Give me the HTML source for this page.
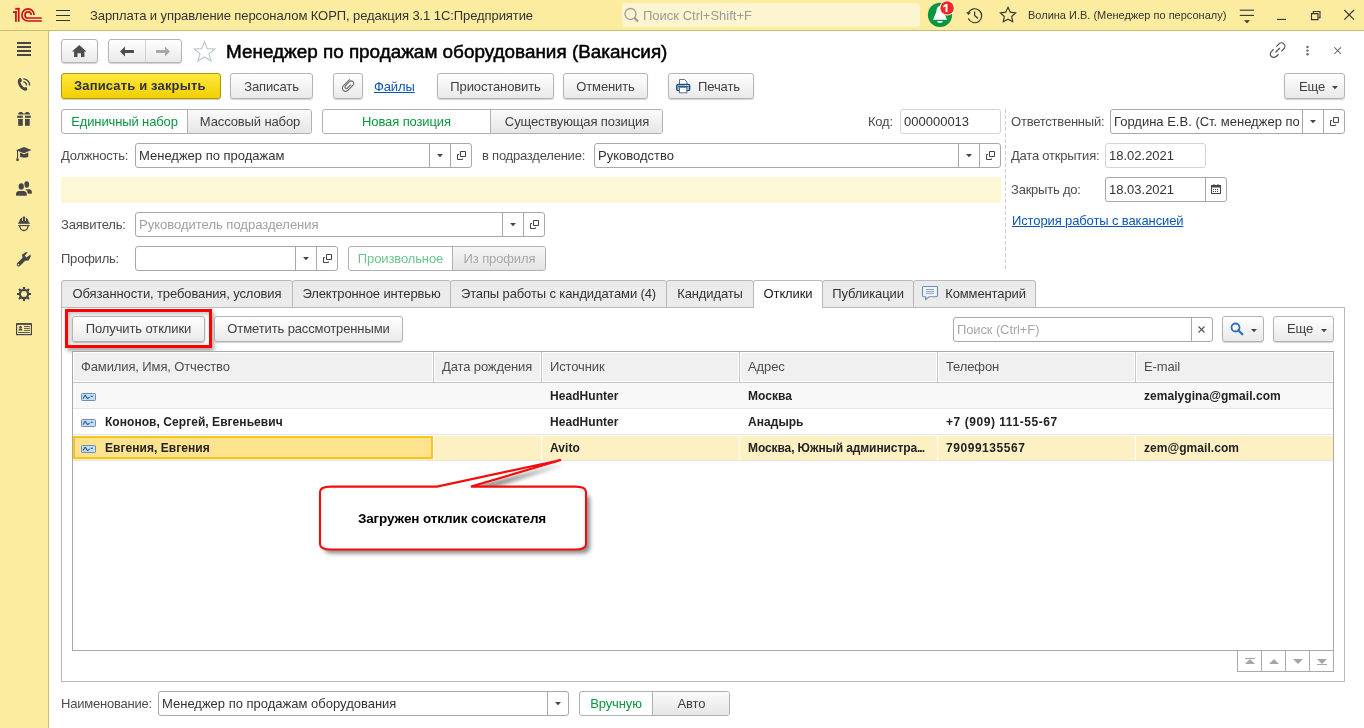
<!DOCTYPE html>
<html><head><meta charset="utf-8">
<style>
*{box-sizing:border-box;margin:0;padding:0}
html,body{width:1364px;height:728px;overflow:hidden;background:#fff;font-family:"Liberation Sans",sans-serif;font-size:13px;color:#333;letter-spacing:-0.12px}
.a{position:absolute}
.t{position:absolute;white-space:nowrap;line-height:15px}
#hdr{left:0;top:0;width:1364px;height:31px;background:#fbeca0;border-bottom:1px solid #cbbb6f}
#side{left:0;top:31px;width:49px;height:697px;background:#fbeca0;border-right:1px solid #cdbf7a}
.btn{position:absolute;border:1px solid #b4b4b4;border-radius:3px;background:linear-gradient(#ffffff,#e9e9e9);box-shadow:0 1px 1px rgba(0,0,0,.18);color:#404040;text-align:center;white-space:nowrap}
.inp{position:absolute;border:1px solid #a8a8a8;border-radius:3px;background:#fff;white-space:nowrap;overflow:hidden}
.inp.ro{border-color:#d4d4d4}
.dd{position:absolute;top:0;bottom:0;border-left:1px solid #a8a8a8}
.lbl{position:absolute;white-space:nowrap;color:#4d4d4d;line-height:15px;letter-spacing:-0.22px}
.tab{position:absolute;top:280px;height:28px;border:1px solid #c8c8c8;border-bottom:none;border-radius:3px 3px 0 0;background:#ebebeb;color:#333;line-height:26px;text-align:center;white-space:nowrap}
.col{position:absolute;top:351px;height:31px;border-left:1px solid #dcdcdc;line-height:30px;padding-left:8px;color:#4d4d4d;white-space:nowrap}
.cell{position:absolute;white-space:nowrap;font-weight:bold;font-size:12px;color:#222;line-height:26px;letter-spacing:0.05px}
body{will-change:transform}</style></head>
<body>
<!-- header -->
<div id="hdr" class="a"></div>
<div id="side" class="a"></div>

<!-- 1C logo -->
<svg class="a" style="left:0;top:0" width="50" height="30" viewBox="0 0 50 30">
 <g fill="#d0121a">
  <rect x="13" y="11.2" width="3.8" height="1.8"/><rect x="15" y="11.2" width="1.8" height="10.6"/>
  <rect x="15.2" y="7.9" width="4.4" height="1.8"/><rect x="17.8" y="7.9" width="1.8" height="13.9"/>
 </g>
 <g fill="none" stroke="#d0121a" stroke-width="1.7">
  <path d="M34.1 14.9 A6.1 6.1 0 1 0 28 21 H41.8"/>
  <path d="M31.1 15 A3.05 3.05 0 1 0 28 18 H41.8"/>
 </g>
</svg>
<!-- hamburger -->
<div class="a" style="left:56px;top:10px;width:14px;height:2px;border-top:1.5px solid #333"></div>
<div class="a" style="left:56px;top:15px;width:14px;height:2px;border-top:1.5px solid #333"></div>
<div class="a" style="left:56px;top:20px;width:14px;height:2px;border-top:1.5px solid #333"></div>
<div class="t" style="left:90px;top:8px;color:#333;letter-spacing:-0.08px">Зарплата и управление персоналом КОРП, редакция 3.1 1С:Предприятие</div>
<!-- search -->
<div class="a" style="left:622px;top:3px;width:298px;height:24px;background:#fdf5cf;border-radius:3px"></div>
<svg class="a" style="left:623px;top:5px" width="18" height="20" viewBox="0 0 18 20"><circle cx="7.5" cy="9" r="5.5" fill="none" stroke="#999" stroke-width="1.3"/><path d="M11.5 13 L15 16.5" stroke="#999" stroke-width="2.2"/></svg>
<div class="t" style="left:643px;top:8px;color:#9a9a9a;letter-spacing:0">Поиск Ctrl+Shift+F</div>

<!-- bell -->
<svg class="a" style="left:920px;top:0" width="40" height="30" viewBox="920 0 40 30">
 <circle cx="940" cy="14.9" r="12.1" fill="#08963f"/>
 <path d="M940 6 C937 6 936.6 9.5 936.3 12 L933 19.8 H947 L943.7 12 C943.4 9.5 943 6 940 6 Z" fill="#fff"/>
 <path d="M936.9 21 H942.9 C942.5 22.3 941.4 23 939.9 23 C938.4 23 937.3 22.3 936.9 21 Z" fill="#fff"/>
 <circle cx="947.1" cy="7.9" r="7.5" fill="#fff"/>
 <circle cx="947.1" cy="7.9" r="6.7" fill="#f42424"/>
 <path d="M943.2 5.7 L945.6 3.9 H947.5 V11.9 H945.5 V6.5 L943.2 7.5 Z" fill="#fff"/>
</svg>
<!-- history -->
<svg class="a" style="left:960px;top:0" width="30" height="30" viewBox="960 0 30 30">
 <path d="M968.6 12.3 A7 7 0 1 1 968.3 18.6" fill="none" stroke="#333" stroke-width="1.2"/>
 <path d="M966.1 12.2 H970.9 L968.5 15.1 Z" fill="#333"/>
 <path d="M974.6 11.5 V15.5 L978 18.5" fill="none" stroke="#333" stroke-width="1.2"/>
</svg>
<!-- star header -->
<svg class="a" style="left:990px;top:0" width="36" height="30" viewBox="990 0 36 30">
 <path d="M1008.00 7.30 L1010.29 12.14 L1015.61 12.83 L1011.71 16.51 L1012.70 21.77 L1008.00 19.20 L1003.30 21.77 L1004.29 16.51 L1000.39 12.83 L1005.71 12.14 Z" fill="none" stroke="#333" stroke-width="1.15" stroke-linejoin="miter"/>
</svg>
<div class="t" style="left:1028px;top:8px;font-size:11px;color:#333;letter-spacing:0">Волина И.В. (Менеджер по персоналу)</div>
<!-- filter -->
<svg class="a" style="left:1230px;top:0" width="134" height="30" viewBox="1230 0 134 30">
 <g stroke="#333" stroke-width="1.1" fill="none">
  <path d="M1239.8 10.2 H1254"/><path d="M1239.8 15.4 H1254"/>
  <path d="M1277 19.4 H1286"/>
  <path d="M1311.5 13.6 H1318 V19.6 H1311.5 Z"/><path d="M1313.3 13.6 V11.5 H1320 V17.7 H1318"/>
  <path d="M1344.3 10 L1354 19.7 M1354 10 L1344.3 19.7"/>
 </g>
 <path d="M1244 20.2 H1250 L1247 23.2 Z" fill="#333"/>
</svg>

<!-- sidebar icons -->
<svg class="a" style="left:0;top:30px" width="48" height="320" viewBox="0 30 48 320">
 <g fill="#46464a">
  <rect x="17" y="42" width="14" height="2"/><rect x="17" y="46" width="14" height="2"/><rect x="17" y="50" width="14" height="2"/><rect x="17" y="54" width="14" height="2"/>
 </g>
 <!-- phone -->
 <path d="M18.3 79.6 C18.7 78.4 19.8 77.7 20.9 78 L22 80.7 C21.8 81.5 21.1 82 20.4 82.3 C20.9 84.5 22.4 86.4 24.2 87.5 C24.8 87.1 25.5 86.8 26.3 87 L27.5 89.3 C27.3 90.3 26.2 90.9 25 90.7 C21.5 89.7 18.5 86 17.8 82.4 C17.7 81.4 17.9 80.4 18.3 79.6 Z" fill="#46464a"/>
 <path d="M23.3 81.9 A3.4 3.4 0 0 1 26.6 85.4" fill="none" stroke="#46464a" stroke-width="1.3"/>
 <path d="M23.3 78.8 A6.5 6.5 0 0 1 29.6 85.4" fill="none" stroke="#46464a" stroke-width="1.3"/>
 <!-- gift -->
 <g fill="#46464a">
  <rect x="17.2" y="115.7" width="5.6" height="2.1"/><rect x="25" y="115.7" width="5.8" height="2.1"/>
  <rect x="18.2" y="118.9" width="4.6" height="6.9"/><rect x="25" y="118.9" width="4.7" height="6.9"/>
  <path d="M18.1 113.8 C18.8 112 21 111.6 22.4 112.4 C23.3 113 24 114 24.1 114.6 H19 C18.4 114.6 18 114.2 18.1 113.8 Z"/>
  <path d="M30 113.8 C29.3 112 27.1 111.6 25.7 112.4 C24.8 113 24 114 23.9 114.6 H29.1 C29.7 114.6 30.1 114.2 30 113.8 Z"/>
 </g>
 <!-- cap -->
 <g fill="#46464a">
  <path d="M16 150.3 L24 147 L31.5 150 L24 153.3 Z"/>
  <path d="M20 152.6 L24 154.2 L28.3 152.6 V156.8 C26.5 158 21.8 158 20 156.8 Z"/>
  <rect x="17" y="150.5" width="1.1" height="8"/>
  <rect x="16.3" y="158.3" width="2.4" height="2.6"/>
 </g>
 <!-- people -->
 <g fill="#46464a">
  <ellipse cx="26.7" cy="184.5" rx="2.4" ry="3.25"/>
  <path d="M25.4 189.3 H29 C30.8 189.4 31.8 190.4 31.8 192 V193.7 H27.6 V193 C27.6 191.6 26.8 190.2 25.4 189.3 Z"/>
  <ellipse cx="21.25" cy="186.4" rx="2.6" ry="3.2" stroke="#fbeca0" stroke-width="1.4" paint-order="stroke"/>
  <path d="M16.1 195.7 V193.5 C16.1 191.8 17.5 191 19.2 190.9 H23.6 C25.3 191 26.7 191.8 26.7 193.5 V195.7 Z" stroke="#fbeca0" stroke-width="1.4" paint-order="stroke"/>
 </g>
 <!-- helmet -->
 <g fill="#46464a">
  <path d="M19.1 223 C19.1 219.4 20.9 217.2 23.9 217.2 C26.9 217.2 28.7 219.4 28.7 223 Z"/>
  <rect x="18.1" y="222.5" width="11.7" height="1.3"/>
  <rect x="18.3" y="225" width="11.3" height="1.1"/>
  <path d="M19.7 226 C20.1 229 21.8 230.5 23.9 230.5 C26 230.5 27.7 229 28.1 226" fill="none" stroke="#46464a" stroke-width="1.3"/>
 </g>
 <rect x="22" y="217.4" width="0.9" height="3.6" fill="#fbeca0"/><rect x="25" y="217.4" width="0.9" height="3.6" fill="#fbeca0"/>
 <rect x="22.9" y="216.6" width="2.1" height="4.6" fill="#46464a"/>
 <!-- wrench -->
 <path d="M17.3 263.1 L22.6 257.8 L22 254.7 L25.4 252.2 L27.9 252.2 L24.8 255.4 L26.5 257.4 L30.3 254.5 L30.8 256.4 L28.6 260.5 L25.2 260.7 L19.9 266 C19.1 266.7 17.9 266.6 17.3 265.9 C16.6 265.1 16.6 263.9 17.3 263.1 Z" fill="#46464a"/>
 <circle cx="18.5" cy="264.7" r="0.8" fill="#fbeca0"/>
 <!-- gear -->
 <g fill="#46464a">
  <circle cx="24" cy="294" r="5.2"/>
  <g stroke="#46464a" stroke-width="2.2">
   <path d="M24 287 V301 M17 294 H31 M19 289 L29 299 M29 289 L19 299"/>
  </g>
 </g>
 <circle cx="24" cy="294" r="3" fill="#fbeca0"/>
 <!-- id card -->
 <rect x="16.6" y="323.8" width="14.8" height="10.8" fill="none" stroke="#46464a" stroke-width="1.2"/>
 <g fill="#46464a">
  <rect x="16.6" y="323.2" width="14.8" height="1.6"/>
  <ellipse cx="20.5" cy="327.2" rx="1.2" ry="1.5"/>
  <path d="M18.4 330.6 C18.4 329.4 19.3 328.8 20.5 328.8 C21.7 328.8 22.6 329.4 22.6 330.6 Z"/>
  <rect x="18.2" y="332" width="11.6" height="0.9"/>
  <rect x="24" y="325.9" width="5.8" height="0.9"/><rect x="24" y="327.9" width="5.8" height="0.9"/><rect x="24" y="329.9" width="5.8" height="0.9"/>
 </g>
</svg>

<!-- ===== FORM TOP ===== -->
<div class="btn" style="left:61px;top:39px;width:37px;height:24px"></div>
<svg class="a" style="left:72px;top:44px" width="15" height="14" viewBox="0 0 15 14"><path d="M7.25 1 L14.5 7.6 H12.4 V13 H9 V9.2 H5.5 V13 H2.1 V7.6 H0 Z" fill="#4d4d4d"/></svg>
<div class="btn" style="left:108px;top:39px;width:74px;height:24px"></div>
<div class="a" style="left:145px;top:40px;width:1px;height:22px;background:#d0d0d0"></div>
<svg class="a" style="left:120px;top:46px" width="14" height="11" viewBox="0 0 14 11"><path d="M0 5.5 L5 0.5 V3.9 H13.9 V7.1 H5 V10.5 Z" fill="#4d4d4d"/></svg>
<svg class="a" style="left:156px;top:46px" width="14" height="11" viewBox="0 0 14 11"><path d="M14 5.5 L9 0.5 V3.9 H0.1 V7.1 H9 V10.5 Z" fill="#a8a8a8"/></svg>
<svg class="a" style="left:192px;top:40px" width="25" height="23" viewBox="0 0 25 23"><path d="M12.5 1.6 L15.3 8.6 L22.8 9 L17 13.8 L19 21 L12.5 17 L6 21 L8 13.8 L2.2 9 L9.7 8.6 Z" fill="none" stroke="#bcc4cc" stroke-width="1.1"/></svg>
<div class="t" style="left:226px;top:40.5px;font-size:18.9px;line-height:21px;color:#000;letter-spacing:0;-webkit-text-stroke:0.5px #000">Менеджер по продажам оборудования (Вакансия)</div>
<!-- right title icons -->
<svg class="a" style="left:1266px;top:40px" width="80" height="22" viewBox="1266 40 80 22">
 <g fill="none" stroke="#555" stroke-width="1.25">
  <path d="M1276.3 46.6 L1279 43.9 C1280.3 42.6 1282.6 42.6 1283.9 43.9 C1285.2 45.2 1285.2 47.5 1283.9 48.8 L1281.4 51.4"/>
  <path d="M1273.6 49.3 L1271.3 51.6 C1270 52.9 1270 55.2 1271.3 56.5 C1272.6 57.8 1274.9 57.8 1276.2 56.5 L1278.5 54.2"/>
  <path d="M1275.5 52.5 L1279.8 48"/>
  <path d="M1334.3 47.3 L1341 54 M1341 47.3 L1334.3 54" stroke="#666" stroke-width="1.05"/>
 </g>
 <g fill="#666"><circle cx="1307.5" cy="47" r="1.2"/><circle cx="1307.5" cy="50.6" r="1.2"/><circle cx="1307.5" cy="54.2" r="1.2"/></g>
</svg>
<!-- command bar -->
<div class="a" style="left:61px;top:73px;width:160px;height:26px;border:1px solid #b09800;border-radius:3px;background:linear-gradient(#ffe941,#f2cf00);box-shadow:0 1px 1px rgba(0,0,0,.2)"></div>
<div class="t" style="left:74px;top:78px;font-weight:bold;color:#2e3344;letter-spacing:0.15px">Записать и закрыть</div>
<div class="btn" style="left:230px;top:73px;width:83px;height:26px;line-height:25px">Записать</div>
<div class="btn" style="left:333px;top:73px;width:30px;height:26px"></div>
<svg class="a" style="left:330px;top:70px" width="30" height="30" viewBox="0 0 30 30"><path d="M19.8 9.3 L13.3 15.8 C12 17.1 12.1 19.3 13.4 20.5 C14.7 21.7 16.8 21.6 18 20.3 L23.1 15.2 C24.1 14.2 24 12.5 23 11.6 C22 10.7 20.5 10.8 19.5 11.7 L15.4 15.8 C14.8 16.4 14.8 17.4 15.4 18 C16 18.6 17 18.6 17.6 18 L21 14.6" fill="none" stroke="#6a6a6a" stroke-width="1.1"/></svg>
<div class="t" style="left:374px;top:79px;color:#0b56b4;text-decoration:underline">Файлы</div>
<div class="btn" style="left:437px;top:73px;width:117px;height:26px;line-height:25px">Приостановить</div>
<div class="btn" style="left:563px;top:73px;width:85px;height:26px;line-height:25px">Отменить</div>
<div class="btn" style="left:668px;top:73px;width:86px;height:26px;line-height:25px;text-align:left;padding-left:29px">Печать</div>
<svg class="a" style="left:668px;top:74px" width="30" height="24" viewBox="0 0 30 24"><path d="M11.5 5.5 H16.6 L19 7.9 V10.5 H11.5 Z" fill="#fff" stroke="#5d7389" stroke-width="1"/><rect x="8.7" y="10.4" width="13" height="6.2" rx="1.6" fill="#9dbce0" stroke="#1f4f80" stroke-width="1.4"/><path d="M10 12.4 H20.4" stroke="#1f4f80" stroke-width="1"/><circle cx="17.6" cy="11.5" r="0.6" fill="#fff"/><circle cx="19.6" cy="11.5" r="0.6" fill="#fff"/><rect x="11.5" y="13.3" width="7.3" height="5.5" fill="#fff" stroke="#5d7389" stroke-width="1"/></svg>
<div class="btn" style="left:1284px;top:73px;width:61px;height:26px;line-height:25px;text-align:left;padding-left:14px">Еще</div>
<svg class="a" style="left:1332px;top:86px" width="6" height="4" viewBox="0 0 6 4"><path d="M0 0 H6 L3 3.2 Z" fill="#444"/></svg>
<!-- ===== FORM FIELDS ===== -->
<div class="a" style="left:61px;top:109px;width:251px;height:25px;border:1px solid #b0b0b0;border-radius:3px;overflow:hidden;background:#fff"><div class="a" style="left:125px;top:0;width:124px;height:23px;border-left:1px solid #b0b0b0;background:linear-gradient(#fafafa,#e6e6e6)"></div></div>
<div class="t" style="left:61px;top:114px;width:127px;text-align:center;color:#0a9641">Единичный набор</div>
<div class="t" style="left:188px;top:114px;width:124px;text-align:center;color:#404040">Массовый набор</div>
<div class="a" style="left:322px;top:109px;width:341px;height:25px;border:1px solid #b0b0b0;border-radius:3px;overflow:hidden;background:#fff"><div class="a" style="left:167px;top:0;width:172px;height:23px;border-left:1px solid #b0b0b0;background:linear-gradient(#fafafa,#e6e6e6)"></div></div>
<div class="t" style="left:322px;top:114px;width:169px;text-align:center;color:#0a9641">Новая позиция</div>
<div class="t" style="left:491px;top:114px;width:172px;text-align:center;color:#404040">Существующая позиция</div>
<div class="lbl" style="left:868px;top:114px;color:#4d4d4d">Код:</div>
<div class="inp ro" style="left:900px;top:109px;width:101px;height:25px"></div>
<div class="t" style="left:904px;top:114px;letter-spacing:0;color:#333;max-width:93px;overflow:hidden">000000013</div>
<div class="a" style="left:1005px;top:109px;width:1px;height:160px;background:repeating-linear-gradient(#cfcfcf 0 4px,transparent 4px 6px)"></div>
<div class="lbl" style="left:1011px;top:114px;color:#4d4d4d">Ответственный:</div>
<div class="inp" style="left:1110px;top:109px;width:235px;height:25px"></div>
<div class="t" style="left:1114px;top:114px;letter-spacing:0;color:#333;max-width:185px;overflow:hidden">Гордина Е.В. (Ст. менеджер по персоналу)</div>
<div class="a" style="left:1323px;top:109px;width:1px;height:25px;background:#a8a8a8"></div>
<svg class="a" style="left:1329px;top:116px" width="11" height="11" viewBox="0 0 11 11"><path d="M4.5 1.5 H9.5 V6.5 H4.5 Z" fill="none" stroke="#444" stroke-width="1"/><path d="M3 4.5 H1.5 V9.5 H6.5 V8.5" fill="none" stroke="#444" stroke-width="1"/></svg>
<div class="a" style="left:1302px;top:109px;width:1px;height:25px;background:#a8a8a8"></div>
<svg class="a" style="left:1310px;top:120px" width="6" height="4" viewBox="0 0 6 4"><path d="M0 0 H6 L3 3.2 Z" fill="#444"/></svg>
<div class="lbl" style="left:61px;top:148px;color:#4d4d4d">Должность:</div>
<div class="inp" style="left:135px;top:143px;width:337px;height:25px"></div>
<div class="t" style="left:139px;top:148px;letter-spacing:0;color:#333;max-width:287px;overflow:hidden">Менеджер по продажам</div>
<div class="a" style="left:450px;top:143px;width:1px;height:25px;background:#a8a8a8"></div>
<svg class="a" style="left:456px;top:150px" width="11" height="11" viewBox="0 0 11 11"><path d="M4.5 1.5 H9.5 V6.5 H4.5 Z" fill="none" stroke="#444" stroke-width="1"/><path d="M3 4.5 H1.5 V9.5 H6.5 V8.5" fill="none" stroke="#444" stroke-width="1"/></svg>
<div class="a" style="left:429px;top:143px;width:1px;height:25px;background:#a8a8a8"></div>
<svg class="a" style="left:437px;top:154px" width="6" height="4" viewBox="0 0 6 4"><path d="M0 0 H6 L3 3.2 Z" fill="#444"/></svg>
<div class="lbl" style="left:482px;top:148px;color:#4d4d4d">в подразделение:</div>
<div class="inp" style="left:594px;top:143px;width:407px;height:25px"></div>
<div class="t" style="left:598px;top:148px;letter-spacing:0;color:#333;max-width:357px;overflow:hidden">Руководство</div>
<div class="a" style="left:979px;top:143px;width:1px;height:25px;background:#a8a8a8"></div>
<svg class="a" style="left:985px;top:150px" width="11" height="11" viewBox="0 0 11 11"><path d="M4.5 1.5 H9.5 V6.5 H4.5 Z" fill="none" stroke="#444" stroke-width="1"/><path d="M3 4.5 H1.5 V9.5 H6.5 V8.5" fill="none" stroke="#444" stroke-width="1"/></svg>
<div class="a" style="left:958px;top:143px;width:1px;height:25px;background:#a8a8a8"></div>
<svg class="a" style="left:966px;top:154px" width="6" height="4" viewBox="0 0 6 4"><path d="M0 0 H6 L3 3.2 Z" fill="#444"/></svg>
<div class="lbl" style="left:1011px;top:148px;color:#4d4d4d">Дата открытия:</div>
<div class="inp ro" style="left:1105px;top:143px;width:101px;height:25px"></div>
<div class="t" style="left:1109px;top:148px;letter-spacing:0;color:#333;max-width:93px;overflow:hidden">18.02.2021</div>
<div class="a" style="left:61px;top:177px;width:940px;height:26px;background:#fef7d6"></div>
<div class="lbl" style="left:1011px;top:182px;color:#4d4d4d">Закрыть до:</div>
<div class="inp" style="left:1105px;top:177px;width:122px;height:25px"></div>
<div class="t" style="left:1109px;top:182px;letter-spacing:0;color:#333;max-width:93px;overflow:hidden">18.03.2021</div>
<div class="a" style="left:1205px;top:177px;width:1px;height:25px;background:#a8a8a8"></div>
<svg class="a" style="left:1210px;top:183px" width="12" height="12" viewBox="0 0 12 12"><rect x="1.5" y="2.5" width="9" height="8" fill="none" stroke="#444" stroke-width="1"/><rect x="1.5" y="2.5" width="9" height="2" fill="#444"/><g fill="#444"><rect x="3" y="6" width="1" height="1"/><rect x="5" y="6" width="1" height="1"/><rect x="7" y="6" width="1" height="1"/><rect x="3" y="8" width="1" height="1"/><rect x="5" y="8" width="1" height="1"/><rect x="7" y="8" width="1" height="1"/></g><rect x="3.5" y="1" width="1" height="2" fill="#444"/><rect x="7.5" y="1" width="1" height="2" fill="#444"/></svg>
<div class="lbl" style="left:61px;top:217px;color:#4d4d4d">Заявитель:</div>
<div class="inp" style="left:135px;top:212px;width:410px;height:25px"></div>
<div class="t" style="left:139px;top:217px;letter-spacing:0;color:#a0a0a0;max-width:360px;overflow:hidden">Руководитель подразделения</div>
<div class="a" style="left:523px;top:212px;width:1px;height:25px;background:#a8a8a8"></div>
<svg class="a" style="left:529px;top:219px" width="11" height="11" viewBox="0 0 11 11"><path d="M4.5 1.5 H9.5 V6.5 H4.5 Z" fill="none" stroke="#444" stroke-width="1"/><path d="M3 4.5 H1.5 V9.5 H6.5 V8.5" fill="none" stroke="#444" stroke-width="1"/></svg>
<div class="a" style="left:502px;top:212px;width:1px;height:25px;background:#a8a8a8"></div>
<svg class="a" style="left:510px;top:223px" width="6" height="4" viewBox="0 0 6 4"><path d="M0 0 H6 L3 3.2 Z" fill="#444"/></svg>
<div class="t" style="left:1012px;top:213px;color:#0b56b4;text-decoration:underline">История работы с вакансией</div>
<div class="lbl" style="left:61px;top:251px;color:#4d4d4d">Профиль:</div>
<div class="inp" style="left:135px;top:246px;width:203px;height:25px"></div>
<div class="a" style="left:316px;top:246px;width:1px;height:25px;background:#a8a8a8"></div>
<svg class="a" style="left:322px;top:253px" width="11" height="11" viewBox="0 0 11 11"><path d="M4.5 1.5 H9.5 V6.5 H4.5 Z" fill="none" stroke="#444" stroke-width="1"/><path d="M3 4.5 H1.5 V9.5 H6.5 V8.5" fill="none" stroke="#444" stroke-width="1"/></svg>
<div class="a" style="left:295px;top:246px;width:1px;height:25px;background:#a8a8a8"></div>
<svg class="a" style="left:303px;top:257px" width="6" height="4" viewBox="0 0 6 4"><path d="M0 0 H6 L3 3.2 Z" fill="#444"/></svg>
<div class="a" style="left:348px;top:246px;width:198px;height:25px;border:1px solid #b0b0b0;border-radius:3px;overflow:hidden;background:#fff"><div class="a" style="left:103px;top:0;width:93px;height:23px;border-left:1px solid #b0b0b0;background:linear-gradient(#f6f6f6,#e4e4e4)"></div></div>
<div class="t" style="left:348px;top:251px;width:105px;text-align:center;color:#6cc58c">Произвольное</div>
<div class="t" style="left:453px;top:251px;width:93px;text-align:center;color:#a8a8a8">Из профиля</div>
<!-- ===== END FORM FIELDS ===== -->
<!-- ===== TABLE ===== -->
<div class="a" style="left:61px;top:307px;width:1284px;height:375px;border:1px solid #b9b9b9"></div>
<div class="a" style="left:61px;top:280px;width:232px;height:28px;border:1px solid #b9b9b9;border-bottom:1px solid #b9b9b9;border-radius:3px 3px 0 0;background:#ebebeb"></div>
<div class="t" style="left:61px;top:286px;width:232px;text-align:center;color:#333">Обязанности, требования, условия</div>
<div class="a" style="left:292px;top:280px;width:159px;height:28px;border:1px solid #b9b9b9;border-bottom:1px solid #b9b9b9;border-radius:3px 3px 0 0;background:#ebebeb"></div>
<div class="t" style="left:292px;top:286px;width:159px;text-align:center;color:#333">Электронное интервью</div>
<div class="a" style="left:450px;top:280px;width:217px;height:28px;border:1px solid #b9b9b9;border-bottom:1px solid #b9b9b9;border-radius:3px 3px 0 0;background:#ebebeb"></div>
<div class="t" style="left:450px;top:286px;width:217px;text-align:center;color:#333">Этапы работы с кандидатами (4)</div>
<div class="a" style="left:666px;top:280px;width:88px;height:28px;border:1px solid #b9b9b9;border-bottom:1px solid #b9b9b9;border-radius:3px 3px 0 0;background:#ebebeb"></div>
<div class="t" style="left:666px;top:286px;width:88px;text-align:center;color:#333">Кандидаты</div>
<div class="a" style="left:753px;top:280px;width:70px;height:28px;border:1px solid #b9b9b9;border-bottom:none;border-radius:3px 3px 0 0;background:#fff"></div>
<div class="t" style="left:753px;top:286px;width:70px;text-align:center;color:#1a1a1a">Отклики</div>
<div class="a" style="left:822px;top:280px;width:92px;height:28px;border:1px solid #b9b9b9;border-bottom:1px solid #b9b9b9;border-radius:3px 3px 0 0;background:#ebebeb"></div>
<div class="t" style="left:822px;top:286px;width:92px;text-align:center;color:#333">Публикации</div>
<div class="a" style="left:913px;top:280px;width:123px;height:28px;border:1px solid #b9b9b9;border-bottom:1px solid #b9b9b9;border-radius:3px 3px 0 0;background:#ebebeb"></div>
<div class="t" style="left:913px;top:286px;width:123px;text-align:center;padding-left:22px;color:#333">Комментарий</div>
<svg class="a" style="left:914px;top:280px" width="30" height="24" viewBox="0 0 30 24"><path d="M9.7 6.5 H22.3 C23 6.5 23.5 7 23.5 7.7 V15.5 C23.5 16.2 23 16.7 22.3 16.7 H15.1 L11.7 19.5 V16.7 H9.7 C9 16.7 8.5 16.2 8.5 15.5 V7.7 C8.5 7 9 6.5 9.7 6.5 Z" fill="#eef3f9" stroke="#6d8db0" stroke-width="1.1"/><path d="M12 9.5 H20 M12 11.5 H20 M12 13.4 H20" stroke="#8ea3bb" stroke-width="1"/></svg>
<div class="a" style="left:65px;top:309px;width:147px;height:39px;border:3px solid #ff0000;box-shadow:2px 3px 4px rgba(0,0,0,.35), inset 2px 2px 4px rgba(0,0,0,.25)"></div>
<div class="btn" style="left:72px;top:316px;width:133px;height:26px;line-height:24px;box-shadow:0 1px 2px rgba(0,0,0,.35)">Получить отклики</div>
<div class="btn" style="left:214px;top:316px;width:189px;height:26px;line-height:24px">Отметить рассмотренными</div>
<div class="inp" style="left:953px;top:317px;width:260px;height:25px"></div>
<div class="t" style="left:957px;top:322px;color:#a8a8a8">Поиск (Ctrl+F)</div>
<div class="a" style="left:1191px;top:317px;width:1px;height:25px;background:#a8a8a8"></div>
<svg class="a" style="left:1198px;top:326px" width="7" height="7" viewBox="0 0 7 7"><path d="M0.5 0.5 L6.5 6.5 M6.5 0.5 L0.5 6.5" stroke="#555" stroke-width="1.1"/></svg>
<div class="btn" style="left:1222px;top:316px;width:42px;height:26px"></div>
<svg class="a" style="left:1230px;top:322px" width="14" height="14" viewBox="0 0 14 14"><circle cx="5.5" cy="5.5" r="4" fill="none" stroke="#2d6fb3" stroke-width="1.8"/><path d="M8.3 8.3 L12.3 12.3" stroke="#2d6fb3" stroke-width="2.2" stroke-linecap="round"/></svg>
<svg class="a" style="left:1251px;top:329px" width="6" height="4" viewBox="0 0 6 4"><path d="M0 0 H6 L3 3.2 Z" fill="#444"/></svg>
<div class="btn" style="left:1273px;top:316px;width:61px;height:26px;line-height:24px;text-align:left;padding-left:13px">Еще</div>
<svg class="a" style="left:1321px;top:329px" width="6" height="4" viewBox="0 0 6 4"><path d="M0 0 H6 L3 3.2 Z" fill="#444"/></svg>
<div class="a" style="left:72px;top:351px;width:1262px;height:300px;border:1px solid #a9a9a9;background:#fff"></div>
<div class="a" style="left:73px;top:352px;width:1260px;height:31px;background:#fff;border-bottom:1px solid #c6c6c6"></div>
<div class="a" style="left:74px;top:353px;width:358px;height:28px;background:#f0f0f0"></div>
<div class="t" style="left:81px;top:359px;color:#4d4d4d">Фамилия, Имя, Отчество</div>
<div class="a" style="left:435px;top:353px;width:105px;height:28px;background:#f0f0f0"></div>
<div class="a" style="left:433px;top:352px;width:1px;height:30px;background:#c6c6c6"></div>
<div class="t" style="left:442px;top:359px;color:#4d4d4d">Дата рождения</div>
<div class="a" style="left:543px;top:353px;width:195px;height:28px;background:#f0f0f0"></div>
<div class="a" style="left:541px;top:352px;width:1px;height:30px;background:#c6c6c6"></div>
<div class="t" style="left:550px;top:359px;color:#4d4d4d">Источник</div>
<div class="a" style="left:741px;top:353px;width:195px;height:28px;background:#f0f0f0"></div>
<div class="a" style="left:739px;top:352px;width:1px;height:30px;background:#c6c6c6"></div>
<div class="t" style="left:748px;top:359px;color:#4d4d4d">Адрес</div>
<div class="a" style="left:939px;top:353px;width:195px;height:28px;background:#f0f0f0"></div>
<div class="a" style="left:937px;top:352px;width:1px;height:30px;background:#c6c6c6"></div>
<div class="t" style="left:946px;top:359px;color:#4d4d4d">Телефон</div>
<div class="a" style="left:1137px;top:353px;width:195px;height:28px;background:#f0f0f0"></div>
<div class="a" style="left:1135px;top:352px;width:1px;height:30px;background:#c6c6c6"></div>
<div class="t" style="left:1144px;top:359px;color:#4d4d4d">E-mail</div>
<div class="a" style="left:73px;top:383px;width:1260px;height:26px;background:#f8f8f8;border-bottom:1px solid #e4e4e4"></div>
<svg class="a" style="left:81px;top:393px" width="15" height="8" viewBox="0 0 15 8"><rect x="0.5" y="0.5" width="14" height="7" rx="0.8" fill="#c5ddf4" stroke="#6f8ead" stroke-width="1"/><path d="M2.2 5.6 C2.8 3.8 3.5 2.4 4.3 2.4 C5 2.4 5.5 5.4 6.6 5.4 C7.4 5.4 7.8 4.6 8.6 4.1" fill="none" stroke="#1d4f8c" stroke-width="1.1"/><path d="M9.6 3.3 H11.8" stroke="#1d4f8c" stroke-width="1.1"/></svg>
<div class="cell" style="left:550px;top:383px;">HeadHunter</div>
<div class="cell" style="left:748px;top:383px;">Москва</div>
<div class="cell" style="left:1144px;top:383px;">zemalygina@gmail.com</div>
<div class="a" style="left:73px;top:409px;width:1260px;height:26px;background:#ffffff;border-bottom:1px solid #e4e4e4"></div>
<svg class="a" style="left:81px;top:419px" width="15" height="8" viewBox="0 0 15 8"><rect x="0.5" y="0.5" width="14" height="7" rx="0.8" fill="#c5ddf4" stroke="#6f8ead" stroke-width="1"/><path d="M2.2 5.6 C2.8 3.8 3.5 2.4 4.3 2.4 C5 2.4 5.5 5.4 6.6 5.4 C7.4 5.4 7.8 4.6 8.6 4.1" fill="none" stroke="#1d4f8c" stroke-width="1.1"/><path d="M9.6 3.3 H11.8" stroke="#1d4f8c" stroke-width="1.1"/></svg>
<div class="cell" style="left:105px;top:409px;">Кононов, Сергей, Евгеньевич</div>
<div class="cell" style="left:550px;top:409px;">HeadHunter</div>
<div class="cell" style="left:748px;top:409px;">Анадырь</div>
<div class="cell" style="left:946px;top:409px;letter-spacing:0.55px;">+7 (909) 111-55-67</div>
<div class="a" style="left:73px;top:436px;width:1260px;height:25px;background:#fdf1c4;border-bottom:1px solid #e4e4e4"></div>
<div class="a" style="left:433px;top:436px;width:1px;height:24px;background:#fff"></div>
<div class="a" style="left:541px;top:436px;width:1px;height:24px;background:#fff"></div>
<div class="a" style="left:739px;top:436px;width:1px;height:24px;background:#fff"></div>
<div class="a" style="left:937px;top:436px;width:1px;height:24px;background:#fff"></div>
<div class="a" style="left:1135px;top:436px;width:1px;height:24px;background:#fff"></div>
<div class="a" style="left:73px;top:436px;width:360px;height:23px;background:#fde38e;border:2px solid #f7c51c"></div>
<svg class="a" style="left:81px;top:445px" width="15" height="8" viewBox="0 0 15 8"><rect x="0.5" y="0.5" width="14" height="7" rx="0.8" fill="#c5ddf4" stroke="#6f8ead" stroke-width="1"/><path d="M2.2 5.6 C2.8 3.8 3.5 2.4 4.3 2.4 C5 2.4 5.5 5.4 6.6 5.4 C7.4 5.4 7.8 4.6 8.6 4.1" fill="none" stroke="#1d4f8c" stroke-width="1.1"/><path d="M9.6 3.3 H11.8" stroke="#1d4f8c" stroke-width="1.1"/></svg>
<div class="cell" style="left:105px;top:435px;">Евгения, Евгения</div>
<div class="cell" style="left:550px;top:435px;">Avito</div>
<div class="cell" style="left:748px;top:435px;letter-spacing:-0.1px;">Москва, Южный администра<span style="letter-spacing:-1px">...</span></div>
<div class="cell" style="left:946px;top:435px;letter-spacing:0.55px;">79099135567</div>
<div class="cell" style="left:1144px;top:435px;">zem@gmail.com</div>
<div class="a" style="left:1237px;top:650px;width:97px;height:22px;border:1px solid #a9a9a9;background:#fff"></div>
<div class="a" style="left:1261px;top:650px;width:1px;height:22px;background:#a9a9a9"></div>
<div class="a" style="left:1285px;top:650px;width:1px;height:22px;background:#a9a9a9"></div>
<div class="a" style="left:1309px;top:650px;width:1px;height:22px;background:#a9a9a9"></div>
<svg class="a" style="left:1237px;top:650px" width="97" height="22" viewBox="0 0 97 22"><g fill="#a6a6a6"><rect x="8" y="8" width="10" height="1"/><path d="M13 9 L18 14 H8 Z"/><path d="M37 9 L42 14 H32 Z"/><path d="M56 9 H66 L61 14 Z"/><path d="M80 9 H90 L85 14 Z"/><rect x="80" y="14" width="10" height="1"/></g></svg>
<svg class="a" style="left:300px;top:450px" width="310" height="120" viewBox="300 450 310 120">
 <defs><filter id="sh" x="-10%" y="-10%" width="130%" height="140%"><feGaussianBlur stdDeviation="2.2"/></filter></defs>
 <path d="M330 490 H437 L561 460 L471 490 H576 Q586 490 586 495 V544 Q586 549.5 576 549.5 H330 Q320 549.5 320 544 V495 Q320 490 330 490 Z" fill="#000" opacity="0.45" filter="url(#sh)" transform="translate(4,4)"/>
 <path d="M331 486.6 H437 L561 460 L471 486.6 H575 Q586 486.6 586 492 V544 Q586 549.5 575 549.5 H331 Q320 549.5 320 544 V492 Q320 486.6 331 486.6 Z" fill="#fff" stroke="#f40d0d" stroke-width="2.1"/>
</svg>
<div class="t" style="left:319px;top:511px;width:266px;text-align:center;font-weight:bold;font-size:13.5px;color:#000">Загружен отклик соискателя</div>
<div class="lbl" style="left:61px;top:696px">Наименование:</div>
<div class="inp" style="left:158px;top:691px;width:411px;height:25px"></div>
<div class="t" style="left:162px;top:696px;letter-spacing:0;color:#333">Менеджер по продажам оборудования</div>
<div class="a" style="left:547px;top:691px;width:1px;height:25px;background:#a8a8a8"></div>
<svg class="a" style="left:555px;top:702px" width="6" height="4" viewBox="0 0 6 4"><path d="M0 0 H6 L3 3.2 Z" fill="#444"/></svg>
<div class="a" style="left:579px;top:691px;width:151px;height:25px;border:1px solid #b0b0b0;border-radius:3px;overflow:hidden;background:#fff"><div class="a" style="left:72px;top:0;width:77px;height:23px;border-left:1px solid #b0b0b0;background:linear-gradient(#fafafa,#e6e6e6)"></div></div>
<div class="t" style="left:579px;top:696px;width:74px;text-align:center;color:#0a9641">Вручную</div>
<div class="t" style="left:653px;top:696px;width:77px;text-align:center;color:#404040">Авто</div>
<!-- ===== END TABLE ===== -->
</body></html>
